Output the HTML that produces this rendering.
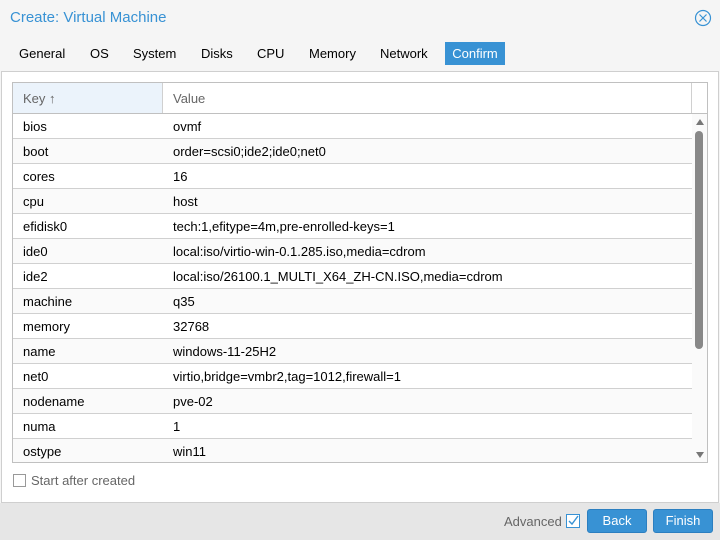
<!DOCTYPE html>
<html><head><style>
*{margin:0;padding:0;box-sizing:border-box}
body{width:720px;height:540px;background:#f5f5f5;font-family:"Liberation Sans",sans-serif;font-size:13px;color:#000;position:relative;overflow:hidden}
.title{position:absolute;left:10px;top:9px;font-size:15px;color:#3892d4}
.close{position:absolute;left:694px;top:9px}
.tab{position:absolute;top:42px;height:23px;line-height:23px;font-size:13px;color:#000}
.tab.a{background:#3892d4;color:#fff;width:60px;text-align:center}
.panel{position:absolute;left:1px;top:71px;width:718px;height:432px;background:#fff;border:1px solid #cfcfcf}
.grid{position:absolute;left:12px;top:82px;width:696px;height:381px;border:1px solid #c0c0c0;overflow:hidden;background:#fff}
.hdr{height:31px;border-bottom:1px solid #c0c0c0;position:relative;color:#666}
.hk{position:absolute;left:0;top:0;width:150px;height:30px;background:#ebf3fb;border-right:1px solid #d0d0d0;padding:8px 0 0 10px}
.hv{position:absolute;left:160px;top:8px}
.hs{position:absolute;left:678px;top:0;width:1px;height:30px;background:#d0d0d0}
.row{height:25px;border-bottom:1px solid #d0d0d0;width:679px;position:relative;line-height:26px}
.row.s{background:#fafafa}
.row span{position:absolute;left:10px}
.row b{font-weight:normal;position:absolute;left:160px}
.sb{position:absolute;left:679px;top:31px;width:16px;height:350px;background:#fafafa}
.thumb{position:absolute;left:3px;top:17px;width:8px;height:218px;background:#888;border-radius:4px}
.foot{position:absolute;left:0;top:503px;width:720px;height:37px;background:#e6e6e6}
.btn{position:absolute;top:509px;width:60px;height:24px;background:#3892d4;border:1px solid #2c7fc0;border-radius:3px;color:#fff;text-align:center;line-height:22px;font-size:13px}
</style></head><body>
<div class="title">Create: Virtual Machine</div>
<svg class="close" width="18" height="18" viewBox="0 0 18 18"><circle cx="9" cy="9" r="7.5" fill="none" stroke="#3892d4" stroke-width="1.2"/><path d="M5.5 5.5L12.5 12.5M12.5 5.5L5.5 12.5" stroke="#3892d4" stroke-width="1.2"/></svg>
<div class="tab" style="left:19px">General</div>
<div class="tab" style="left:90px">OS</div>
<div class="tab" style="left:133px">System</div>
<div class="tab" style="left:201px">Disks</div>
<div class="tab" style="left:257px">CPU</div>
<div class="tab" style="left:309px">Memory</div>
<div class="tab" style="left:380px">Network</div>
<div class="tab a" style="left:445px">Confirm</div>
<div class="panel"></div>
<div class="grid">
<div class="hdr"><div class="hk">Key ↑</div><div class="hv">Value</div><div class="hs"></div></div>
<div class="row"><span>bios</span><b>ovmf</b></div>
<div class="row s"><span>boot</span><b>order=scsi0;ide2;ide0;net0</b></div>
<div class="row"><span>cores</span><b>16</b></div>
<div class="row s"><span>cpu</span><b>host</b></div>
<div class="row"><span>efidisk0</span><b>tech:1,efitype=4m,pre-enrolled-keys=1</b></div>
<div class="row s"><span>ide0</span><b>local:iso/virtio-win-0.1.285.iso,media=cdrom</b></div>
<div class="row"><span>ide2</span><b>local:iso/26100.1_MULTI_X64_ZH-CN.ISO,media=cdrom</b></div>
<div class="row s"><span>machine</span><b>q35</b></div>
<div class="row"><span>memory</span><b>32768</b></div>
<div class="row s"><span>name</span><b>windows-11-25H2</b></div>
<div class="row"><span>net0</span><b>virtio,bridge=vmbr2,tag=1012,firewall=1</b></div>
<div class="row s"><span>nodename</span><b>pve-02</b></div>
<div class="row"><span>numa</span><b>1</b></div>
<div class="row s"><span>ostype</span><b>win11</b></div>
<div class="sb"><svg style="position:absolute;left:3px;top:4px" width="10" height="8"><path d="M1 7L5 1L9 7Z" fill="#777"/></svg><div class="thumb"></div><svg style="position:absolute;left:3px;top:337px" width="10" height="8"><path d="M1 1L5 7L9 1Z" fill="#777"/></svg></div>
</div>
<div style="position:absolute;left:13px;top:474px;width:13px;height:13px;border:1px solid #999;background:#fff"></div>
<div style="position:absolute;left:31px;top:473px;color:#666">Start after created</div>
<div class="foot"></div>
<div style="position:absolute;left:504px;top:514px;color:#666">Advanced</div>
<svg style="position:absolute;left:566px;top:514px" width="14" height="14"><rect x="0.5" y="0.5" width="13" height="13" fill="#fff" stroke="#3892d4"/><path d="M3 7L6 10L12 2" fill="none" stroke="#3892d4" stroke-width="1.4"/></svg>
<div class="btn" style="left:587px">Back</div>
<div class="btn" style="left:653px">Finish</div>
</body></html>
